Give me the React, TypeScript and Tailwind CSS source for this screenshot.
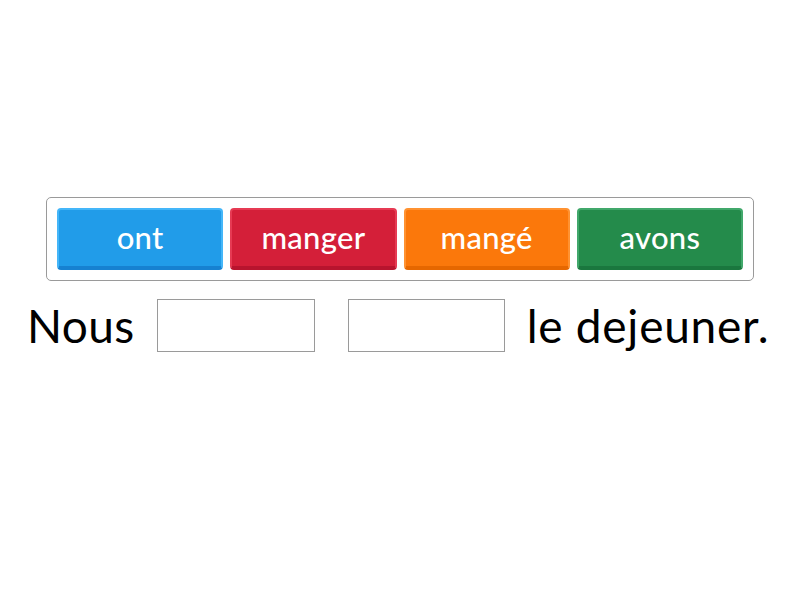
const TILES = [
  { label: 'ont', cls: 'bg-[#219ce9] border-[#44b6f9] border-b-[#1681d1]' },
  { label: 'manger', cls: 'bg-[#d41f39] border-[#e63a53] border-b-[#b8142e]' },
  { label: 'mangé', cls: 'bg-[#fb780b] border-[#ff9231] border-b-[#e66700]' },
  { label: 'avons', cls: 'bg-[#248b4b] border-[#41a86b] border-b-[#1a773e]' },
];

export default function App() {
  return (
    <div className="h-[600px] w-[800px] bg-white font-['Lato',sans-serif] text-black">
      <div className="pt-[197px] pl-[46px]">
        <div className="flex w-[708px] gap-[7px] rounded-[5px] border border-[#9a9a9a] p-[10px]">
          {TILES.map((t) => (
            <div
              key={t.label}
              className={`flex h-[62px] w-[167px] items-center justify-center rounded-[4px] border-2 border-b-[4px] pb-[2px] text-[31px] font-medium tracking-[0.3px] text-white ${t.cls}`}
            >
              {t.label}
            </div>
          ))}
        </div>
      </div>
      <div className="mt-[18px] flex items-center pl-[27px]">
        <span className="text-[46px] leading-none tracking-[0.4px]">Nous</span>
        <div className="ml-[22px] h-[53px] w-[158px] border border-[#9a9a9a]" />
        <div className="ml-[33px] h-[53px] w-[157px] border border-[#9a9a9a]" />
        <span className="ml-[22px] text-[46px] leading-none tracking-[0.75px]">le dejeuner.</span>
      </div>
    </div>
  );
}
